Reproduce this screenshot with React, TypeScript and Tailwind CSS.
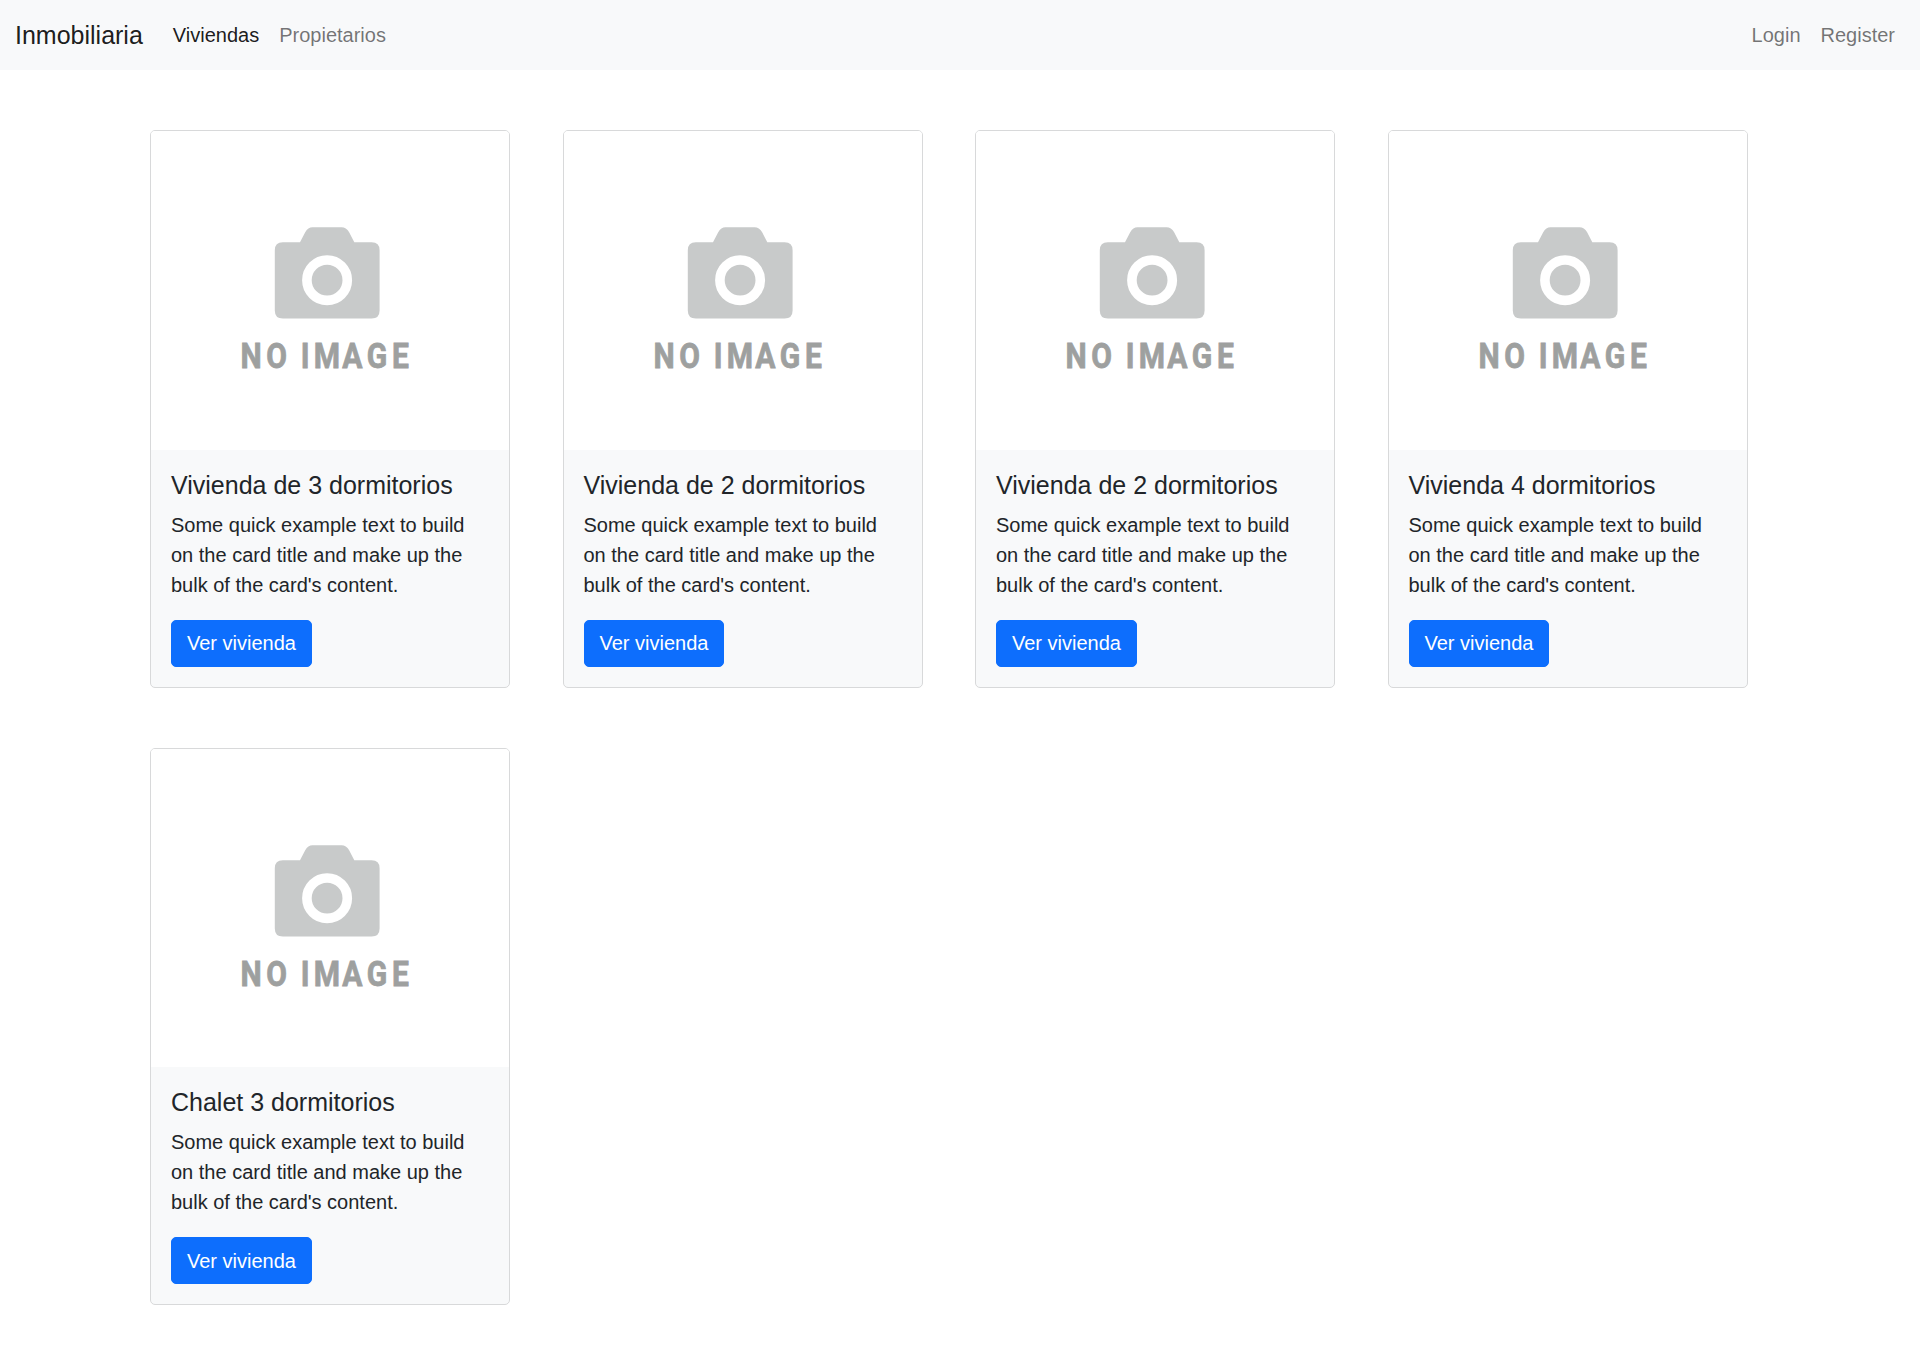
const homes = [
  'Vivienda de 3 dormitorios',
  'Vivienda de 2 dormitorios',
  'Vivienda de 2 dormitorios',
  'Vivienda 4 dormitorios',
  'Chalet 3 dormitorios',
];

function NoImage() {
  return (
    <div className="h-[318.6px] rounded-t-[4px] bg-white">
      <svg viewBox="0 0 358 318" className="block h-[318px] w-[358px]">
        <path
          fill="#c8caca"
          d="M131.800 111.200H149L154.200 101.200Q157 96.200 161.500 96.200H190.500Q195.300 96.200 198 101L203.300 111.200H220.600q8 0 8 8v60.200q0 8-8 8H131.800q-8 0-8-8V119.200q0-8 8-8z"
        />
        <circle cx="176.100" cy="149.200" r="20.200" fill="none" stroke="#fff" strokeWidth="9.600" />
        <g transform="scale(0.87 1)">
          <text
            x="103 132.500 172.200 187 219.900 247.900 277"
            y="237.400"
            fill="#9ea09f"
            stroke="#9ea09f"
            strokeWidth="0.8"
            className="font-[Roboto] text-[34.500px] font-bold"
          >
            NOIMAGE
          </text>
        </g>
      </svg>
    </div>
  );
}

function Card({ title }: { title: string }) {
  return (
    <article className="mt-[60px] w-[360px] rounded-[5px] border border-[#d8d9da] bg-[#f8f9fa]">
      <NoImage />
      <div className="p-5">
        <h5 className="mb-2.5 text-[25px] leading-[30px]">{title}</h5>
        <p className="mb-5">
          Some quick example text to build on the card title and make up the bulk of the card's content.
        </p>
        <a
          href="#"
          className="block w-fit rounded-[5px] border border-[#0d6efd] bg-[#0d6efd] px-[15px] py-[7.500px] text-white"
        >
          Ver vivienda
        </a>
      </div>
    </article>
  );
}

export default function App() {
  return (
    <div className="min-h-[1365px] bg-white font-['Liberation_Sans',sans-serif] text-[20px] leading-[30px] text-[#212529]">
      <nav className="flex h-[70px] items-center bg-[#f8f9fa] px-[15px]">
        <a href="#" className="mr-5 text-[25px] text-black/90">
          Inmobiliaria
        </a>
        <a href="#" className="px-2.5 text-black/90">
          Viviendas
        </a>
        <a href="#" className="px-2.5 text-black/55">
          Propietarios
        </a>
        <a href="#" className="ml-auto px-2.5 text-black/55">
          Login
        </a>
        <a href="#" className="px-2.5 text-black/55">
          Register
        </a>
      </nav>
      <main className="mx-auto grid w-[1650px] grid-cols-4">
        {homes.map((title, i) => (
          <div key={i} className="px-[15px]">
            <Card title={title} />
          </div>
        ))}
      </main>
    </div>
  );
}
